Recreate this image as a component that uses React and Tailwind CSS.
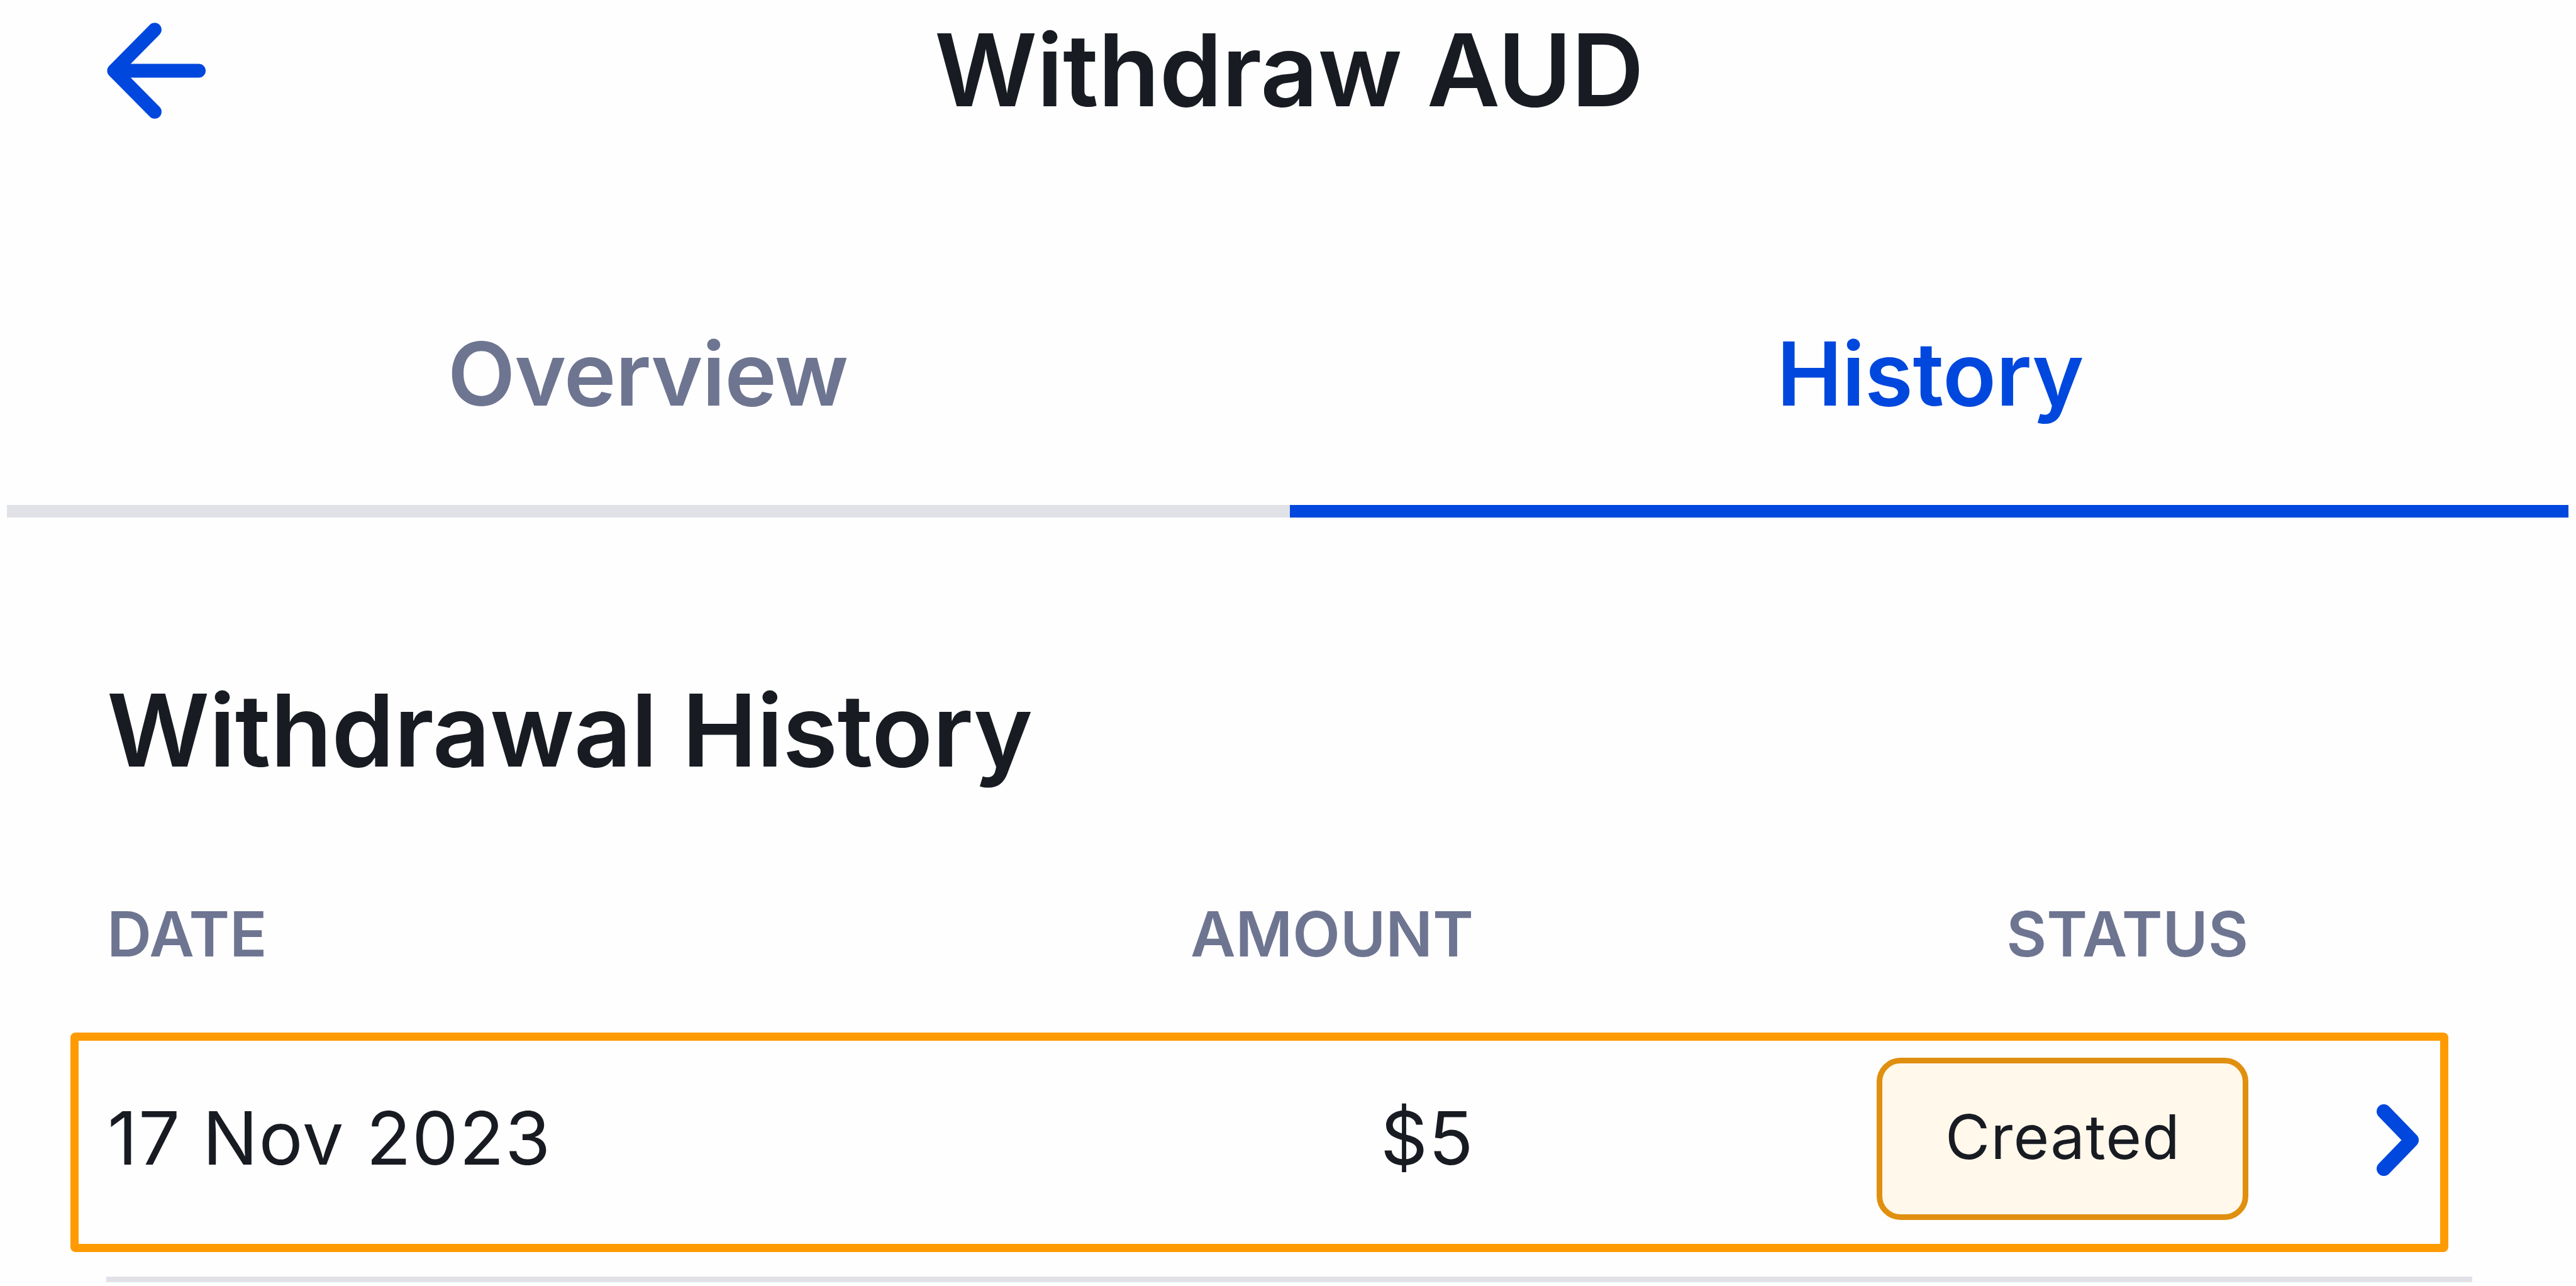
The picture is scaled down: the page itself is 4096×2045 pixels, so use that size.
function BackArrow() {
  return (
    <svg className="mt-[36px] ml-[170px] h-[153px] w-[158px]" viewBox="0 0 158 153" fill="none" stroke="#0048dd" strokeWidth="22" strokeLinecap="round" strokeLinejoin="round" aria-label="Back">
      <path d="M76 11.2L11.4 76.5L76 141.8M11.4 76.5H146" />
    </svg>
  );
}

function ChevronRight() {
  return (
    <svg className="mt-[3px] ml-[204px] h-[114px] w-[67px] shrink-0" viewBox="0 0 67 114" fill="none" stroke="#0048dd" strokeWidth="23" strokeLinecap="round" strokeLinejoin="round" aria-hidden="true">
      <path d="M11.5 11.5L55.5 57L11.5 102.5" />
    </svg>
  );
}

export default function App() {
  return (
    <main className="h-[2045px] w-[4096px] overflow-hidden bg-[#fefefe] font-['Inter',sans-serif] text-[#181b22]">
      <header className="grid h-[480px] grid-cols-[1486px_1fr]">
        <a href="#back"><BackArrow /></a>
        <h1 className="mt-[11px] text-[160px] leading-[200px] font-semibold tracking-[-0.6px] whitespace-nowrap">Withdraw AUD</h1>
      </header>

      <nav className="ml-[11px] grid h-[343px] grid-cols-[2040px_2033px] text-center text-[140px] leading-[228px] font-semibold">
        <a href="#overview" className="border-b-[20px] border-[#e1e2e8] pr-[2px] tracking-[-1px] text-[#6e7591]">Overview</a>
        <a href="#history" className="border-b-[20px] border-[#0048dd] pl-[3px] tracking-[-0.45px] text-[#0048dd]">History</a>
      </nav>

      <section className="pt-[238px]">
        <h2 className="ml-[170px] text-[160px] leading-[200px] font-semibold tracking-[-0.65px] whitespace-nowrap">Withdrawal History</h2>

        <div className="mt-[160px] ml-[170px] grid h-[221px] grid-cols-[1172px_1001px_1232px] text-[98.4px] leading-[130px] font-semibold text-[#6e7591]">
          <span>DATE</span>
          <span className="text-right">AMOUNT</span>
          <span className="text-right">STATUS</span>
        </div>

        <div className="ml-[112px] flex h-[349px] w-[3781px] items-center rounded-[8px] border-[13px] border-[#ff9a00] pb-[11px]">
          <span className="ml-[46px] w-[1172px] shrink-0 pb-[2px] text-[117px] leading-[150px] tracking-[1.4px]">17 Nov 2023</span>
          <span className="w-[1001px] shrink-0 pb-[2px] text-right text-[117px] leading-[150px] tracking-[1.4px]">$5</span>
          <span className="ml-[640px] flex h-[258px] w-[591px] shrink-0 items-center justify-center rounded-[38px] border-[9px] border-[#e08f0e] bg-[#fff8eb] pb-[6px] pl-[1px] text-[97.5px] leading-[130px] tracking-[1.1px]">Created</span>
          <ChevronRight />
        </div>

        <div className="mt-[39px] ml-[169px] h-[9px] w-[3762px] bg-[#e1e2e8]" />
      </section>
    </main>
  );
}
